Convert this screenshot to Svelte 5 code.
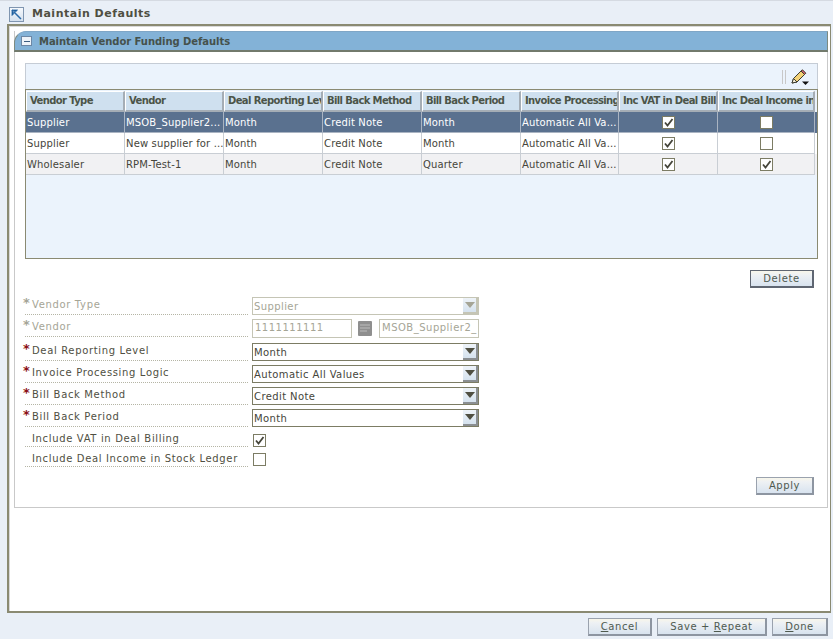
<script>
  const cols = ['Vendor Type','Vendor','Deal Reporting Level','Bill Back Method','Bill Back Period','Invoice Processing Logic','Inc VAT in Deal Billing','Inc Deal Income in Stock Ledger'];
  const rows = [
    {t:'Supplier',v:'MSOB_Supplier2...',d:'Month',m:'Credit Note',p:'Month',i:'Automatic All Va...',a:true,b:false,cls:'rsel'},
    {t:'Supplier',v:'New supplier for ...',d:'Month',m:'Credit Note',p:'Month',i:'Automatic All Va...',a:true,b:false,cls:''},
    {t:'Wholesaler',v:'RPM-Test-1',d:'Month',m:'Credit Note',p:'Quarter',i:'Automatic All Va...',a:true,b:true,cls:'alt'}
  ];
  const selects = [
    {label:'Deal Reporting Level',value:'Month'},
    {label:'Invoice Processing Logic',value:'Automatic All Values'},
    {label:'Bill Back Method',value:'Credit Note'},
    {label:'Bill Back Period',value:'Month'}
  ];
</script>

{#snippet check(on)}
  <span class="cb">
    {#if on}
      <svg width="11" height="11" viewBox="0 0 11 11"><path d="M2 5.5 L4.5 8.5 L9.5 2" fill="none" stroke="#45453a" stroke-width="1.8"/></svg>
    {/if}
  </span>
{/snippet}

{#snippet arrow(dis)}
  <span class="arrow" class:dis>
    <svg width="10" height="6" viewBox="0 0 10 6"><path d="M0 0H10L5 6Z" fill={dis ? '#a5a596' : '#4f4f42'}/></svg>
  </span>
{/snippet}

<div class="page">
  <header class="top">
    <span class="backicon">
      <svg width="13" height="13" viewBox="0 0 13 13"><path d="M2 2H7.5L5.7 3.8 2 2ZM2 2V7.5L3.8 5.7Z" fill="#1f5f9f" stroke="#1f5f9f" stroke-width=".8"/><path d="M3.5 3.5L11 11" stroke="#2a6aa8" stroke-width="1.5"/></svg>
    </span>
    <h1>Maintain Defaults</h1>
  </header>

  <main class="frame">
    <section class="panel">
      <div class="phead">
        <span class="minus"><i></i></span>
        <h2>Maintain Vendor Funding Defaults</h2>
      </div>
      <div class="pbody">
        <div class="toolbar">
          <span class="sep"></span>
          <svg class="pencil" width="20" height="18" viewBox="0 0 20 18">
            <path d="M2 14 L3.5 9.5 L11 2 L14.5 5.5 L7 13Z" fill="#f3d277" stroke="#3c3c30" stroke-width="1"/>
            <path d="M11 2 L12.5 .8 L15.8 4.2 L14.5 5.5Z" fill="#d8606e" stroke="#3c3c30" stroke-width="1"/>
            <path d="M2 14 L3.5 9.5 L7 13Z" fill="#f7efd8" stroke="#3c3c30" stroke-width="1"/>
            <path d="M12 12.5H19L15.5 16Z" fill="#111"/>
          </svg>
        </div>
        <div class="gridwrap">
          <div class="ghead">
            {#each cols as c}<div class="hc"><span>{c}</span></div>{/each}
          </div>
          {#each rows as r}
            <div class="row {r.cls}">
              <div class="c">{r.t}</div>
              <div class="c">{r.v}</div>
              <div class="c">{r.d}</div>
              <div class="c">{r.m}</div>
              <div class="c">{r.p}</div>
              <div class="c">{r.i}</div>
              <div class="c mid">{@render check(r.a)}</div>
              <div class="c mid">{@render check(r.b)}</div>
            </div>
          {/each}
        </div>

        <div class="actions first"><button class="btn del">Delete</button></div>

        <div class="form">
          <div class="fr h22">
            <div class="lab dis"><em>*</em>Vendor Type</div>
            <div class="sel dis"><span>Supplier</span>{@render arrow(true)}</div>
          </div>
          <div class="fr h24">
            <div class="lab dis"><em>*</em>Vendor</div>
            <div class="ctl">
              <span class="inp w100">1111111111</span>
              <svg class="lov" width="14" height="15" viewBox="0 0 14 15"><rect width="14" height="15" rx="1" fill="#8f8f8f"/><path d="M2 4H12M2 7H12M2 10H9" stroke="#bdbdbd"/></svg>
              <span class="inp w100 clip">MSOB_Supplier2_</span>
            </div>
          </div>
          {#each selects as s}
            <div class="fr h22">
              <div class="lab"><em>*</em>{s.label}</div>
              <div class="sel"><span>{s.value}</span>{@render arrow(false)}</div>
            </div>
          {/each}
          <div class="fr h20 c1">
            <div class="lab"><em></em>Include VAT in Deal Billing</div>
            {@render check(true)}
          </div>
          <div class="fr h20 c2">
            <div class="lab"><em></em>Include Deal Income in Stock Ledger</div>
            {@render check(false)}
          </div>
        </div>

        <div class="actions second"><button class="btn apply">Apply</button></div>
      </div>
    </section>
  </main>

  <footer class="foot">
    <button class="btn cancel"><u>C</u>ancel</button>
    <button class="btn save">Save + <u>R</u>epeat</button>
    <button class="btn done"><u>D</u>one</button>
  </footer>
</div>

<style>
  :global(body) { margin: 0; }
  .page {
    width: 833px; height: 639px; box-sizing: border-box; overflow: hidden;
    background: #e9eff7; border-top: 1px solid #d5dae2;
    font: 10px "DejaVu Sans", Verdana, sans-serif; color: #45453a;
    letter-spacing: .15px;
  }
  .top { height: 23px; display: flex; align-items: center; padding-left: 9px; gap: 8px; box-sizing: border-box; padding-top: 1px; }
  .backicon { width: 13px; height: 13px; border: 1px solid #7f95b0; background: linear-gradient(#f6f9fd,#d4e0ee); display: flex; margin-top: 2px; }
  h1 { margin: 0; font-size: 11px; font-weight: bold; color: #4f4f42; letter-spacing: .5px; }
  .frame {
    margin-left: 7px; margin-right: 2px; height: 589px; box-sizing: border-box;
    border: 2px solid #8a8a72; border-right-width: 1px; border-bottom-width: 2px; background: #fff; padding: 5px 2px 0 5px;
    box-shadow: inset 1px 1px 0 #d8d8d8;
  }
  .panel { height: 477px; box-sizing: border-box; border: 1px solid #c9c9c9; border-top: 0; }
  .phead {
    height: 21px; box-sizing: border-box; margin: 0 -1px; display: flex; align-items: center; gap: 7px; padding-left: 6px;
    background: #83b2d7; border: 1px solid #7d8a80; border-bottom: 2px solid #727a6c; border-top-color: #7fa6c6; border-top-left-radius: 12px;
  }
  .minus { width: 9px; height: 8px; background: #eef3f9; border: 1px solid #6d87a5; display: flex; align-items: center; justify-content: center; }
  .minus i { width: 6px; height: 1px; background: #3d5d80; }
  h2 { margin: 0; font-size: 10px; font-weight: bold; color: #45514c; letter-spacing: -.05px; }
  .pbody { padding: 11px 9px 0 10px; }
  .toolbar {
    height: 26px; box-sizing: border-box; background: #ebf3fc; border: 1px solid #c5ccd5; border-bottom: 0;
    display: flex; align-items: center; justify-content: flex-end; padding-right: 7px; gap: 4px;
  }
  .sep { width: 2px; height: 14px; border-left: 1px solid #c8c8c8; border-right: 1px solid #c8c8c8; }
  .pencil { margin-top: 2px; }
  .gridwrap { height: 170px; box-sizing: border-box; background: #ebf3fc; border: 1px solid #8a8a72; padding-top: 1px; }
  .ghead, .row { display: grid; grid-template-columns: 99px 99px 99px 99px 99px 98px 99px 97px; }
  .ghead { height: 21px; }
  .hc {
    box-sizing: border-box; height: 21px; background: #cfe0ef; border: 1px solid #fff; border-right: 2px solid #a5adb5; border-bottom: 2px solid #a5adb5; font-weight: bold; color: #4b5448; overflow: hidden; white-space: nowrap; padding: 3px 0 0 3px; letter-spacing: -.62px;
  }
  .row { height: 21px; background: #fff; color: #45453a; }
  .row.rsel { background: #5a718f; color: #fff; }
  .row.alt { background: #f1f1f3; }
  .c { box-sizing: border-box; height: 21px; border-right: 1px solid #c9ced4; border-bottom: 1px solid #c9ced4; padding: 5px 0 0 1px; white-space: nowrap; overflow: hidden; }
  .rsel .c { border-color: #aab4c2; }
  .mid { display: flex; align-items: center; justify-content: center; padding: 0; }
  .cb { width: 11px; height: 11px; border: 1px solid #7c7c64; background: #fff; display: inline-block; flex: none; line-height: 0; }
  .actions { display: flex; justify-content: flex-end; }
  .actions.first { margin-top: 11px; padding-right: 4px; height: 18px; }
  .actions.second { margin-top: 5px; padding-right: 4px; }
  .btn {
    font: inherit; letter-spacing: .6px; color: #4f5a4f; padding: 0; height: 18px; box-sizing: border-box;
    background: linear-gradient(#f8f6ea 0, #eef1f4 25%, #d8e3ef 100%);
    border: 1px solid #9aa2ae; border-right: 2px solid #8d95a1; border-bottom: 2px solid #8d95a1;
  }
  .del { width: 64px; border-color: #5f6672; }
  .apply { width: 58px; }
  .form { margin-top: 9px; }
  .fr { display: flex; align-items: flex-start; gap: 4px; box-sizing: border-box; }
  .h22 { height: 22px; } .h24 { height: 24px; } .h20 { height: 20px; }
  .c1 { margin-top: 1px; }
  .lab {
    width: 223px; box-sizing: border-box; height: 18px; line-height: 15px; border-bottom: 1px dotted #b5b5a5; white-space: nowrap; color: #4f4f42; letter-spacing: .65px;
  }
  .h20 .lab { height: 15px; line-height: 13px; }
  .lab em { display: inline-block; width: 9px; margin-left: -2px; font-style: normal; font-weight: bold; color: #8b0f14; font-size: 13px; line-height: 10px; letter-spacing: 0; vertical-align: 1px; }
  .lab.dis { color: #a5a596; }
  .lab.dis em { color: #a5a596; }
  .fr .lab { display: block; }
  .fr > .cb { margin: 2px 0 0 1px; }
  .c2 > .cb { margin-top: 1px; }
  .sel, .inp { box-sizing: border-box; height: 18px; border: 1px solid #7c7c64; background: #fff; }
  .fr .sel { width: 227px; display: flex; justify-content: space-between; align-items: center; padding-left: 1px; color: #45453a; letter-spacing: .4px; }
  .fr .sel.dis { border-color: #c5c5b5; color: #a5a596; }
  .arrow { width: 15px; height: 16px; box-sizing: border-box; display: flex; align-items: center; justify-content: center; background: linear-gradient(#eef3f8,#d5e2ee); border-right: 2px solid #8b8f92; border-bottom: 2px solid #8b8f92; }
  .arrow.dis { border-color: #c5c5b5; }
  .ctl { display: flex; align-items: flex-start; gap: 6px; width: 227px; }
  .inp { color: #a5a596; border-color: #c5c5b5; display: block; padding: 2px; height: 19px; white-space: nowrap; overflow: hidden; letter-spacing: .5px; }
  .w100 { width: 100px; }
  .lov { margin-top: 2px; }
  .lov + .inp { margin-left: 1px; }
  .foot { display: flex; justify-content: flex-end; gap: 5px; padding: 5px 5px 0 0; }
  .cancel { width: 64px; } .save { width: 110px; } .done { width: 56px; }
  u { text-underline-offset: 1px; }
</style>
